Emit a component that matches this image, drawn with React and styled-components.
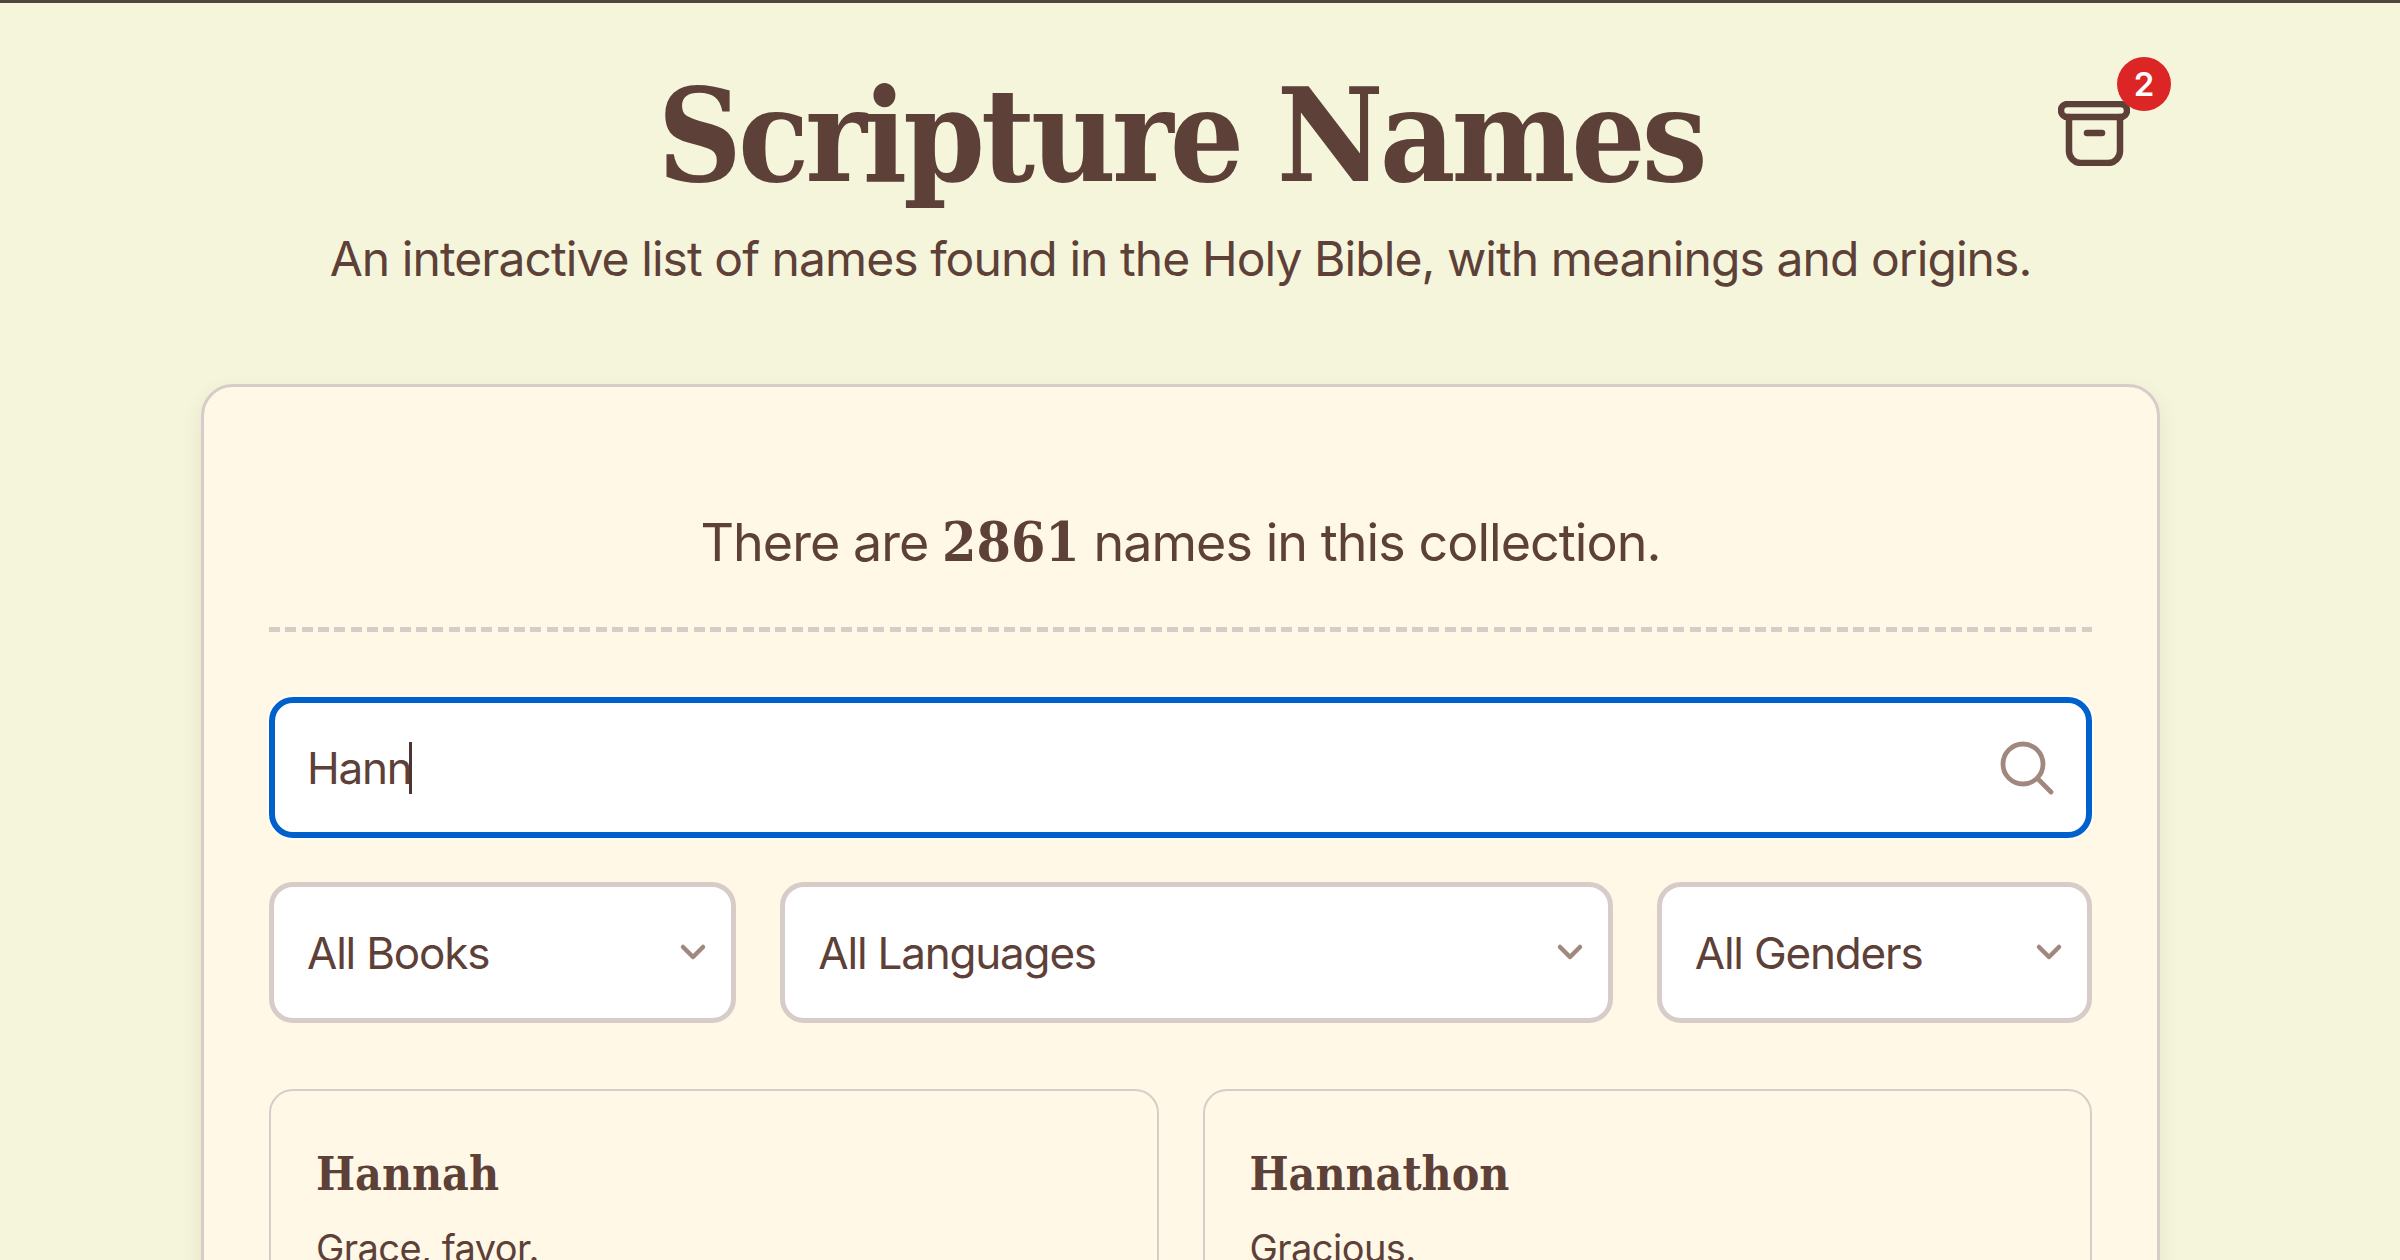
import React from "react";
import styled, { createGlobalStyle } from "styled-components";

const ink = "#5d4037";
const line = "#d7ccc8";
const muted = "#a1887f";
const serif = `"DejaVu Serif", "Liberation Serif", serif`;
const sans = `Inter, "Liberation Sans", sans-serif`;

const GlobalStyle = createGlobalStyle`
  html, body {
    margin: 0;
    height: 1260px;
    overflow: hidden;
    background: #f5f5dc;
  }
`;

const Page = styled.div`
  box-sizing: border-box;
  width: 2400px;
  height: 1260px;
  padding: 0 240px 0 201px;
  border-top: 3px solid #4e453c;
  color: ${ink};
  font-family: ${sans};
`;

const Header = styled.header`
  display: grid;
  grid-template-columns: 1fr auto 1fr;
  height: 381px;
`;

const Heading = styled.div`
  grid-column: 2;
  text-align: center;
`;

const Title = styled.h1`
  margin: 59px 0 0;
  font-family: ${serif};
  font-size: 130px;
  line-height: 148px;
  font-weight: 700;
  font-stretch: condensed;
  letter-spacing: -4px;
  white-space: nowrap;
`;

const Subtitle = styled.p`
  margin: 21px 0 0;
  font-size: 48px;
  line-height: 56px;
  letter-spacing: -0.93px;
  white-space: nowrap;
`;

const ArchiveButton = styled.button`
  grid-column: 3;
  justify-self: end;
  align-self: start;
  position: relative;
  margin: 98px 30px 0 0;
  padding: 0;
  width: 72px;
  height: 65px;
  border: 0;
  background: none;
  color: ${ink};
`;

const Badge = styled.span`
  position: absolute;
  top: -44px;
  right: -41px;
  width: 54px;
  height: 54px;
  display: flex;
  align-items: center;
  justify-content: center;
  border-radius: 50%;
  background: #dc2626;
  color: #fff;
  font-family: ${sans};
  font-size: 33px;
  font-weight: 600;
`;

const Panel = styled.main`
  box-sizing: border-box;
  height: 1100px;
  padding: 64px 65px;
  background: #fff8e7;
  border: 3px solid ${line};
  border-radius: 32px;
  box-shadow: 0 8px 20px rgba(93, 64, 55, 0.1);
`;

const Count = styled.p`
  margin: 49px 0 42px;
  text-align: center;
  font-size: 52px;
  line-height: 84px;
  letter-spacing: -0.95px;
`;

const CountNumber = styled.strong`
  font-family: ${serif};
  font-size: 55px;
  font-weight: 700;
  font-stretch: condensed;
  letter-spacing: 0;
`;

const Divider = styled.hr`
  margin: 0;
  height: 5px;
  border: 0;
  background: repeating-linear-gradient(90deg, ${line} 0 11px, transparent 11px 16.33px);
`;

const fieldBox = `
  box-sizing: border-box;
  height: 141px;
  display: flex;
  align-items: center;
  background: #fff;
  border-radius: 24px;
  font-size: 44px;
  letter-spacing: -1.2px;
`;

const SearchField = styled.div`
  ${fieldBox}
  margin-top: 65px;
  padding: 0 27px 0 32px;
  border: 6px solid #0060cc;
  box-shadow: 0 0 0 2px rgba(255, 255, 255, 0.7);
`;

const SearchValue = styled.span`
  line-height: 1;
`;

const Caret = styled.span`
  width: 3px;
  height: 52px;
  margin-left: -3px;
  background: #4e342e;
`;

const SearchIcon = styled.svg`
  margin-left: auto;
  width: 64px;
  height: 64px;
  color: ${muted};
`;

const Filters = styled.div`
  display: grid;
  grid-template-columns: 467fr 832fr 435fr;
  gap: 44px;
  margin-top: 44px;
`;

const SelectBox = styled.div`
  ${fieldBox}
  justify-content: space-between;
  padding: 0 24px 0 33px;
  border: 5px solid ${line};
`;

const Chevron = styled.svg`
  width: 28px;
  height: 20px;
  margin-top: -2px;
  color: ${muted};
`;

const Results = styled.div`
  display: grid;
  grid-template-columns: 1fr 1fr;
  gap: 44px;
  margin-top: 66px;
`;

const NameCard = styled.article`
  box-sizing: border-box;
  height: 300px;
  padding: 55px 45px;
  border: 2px solid ${line};
  border-radius: 24px;
`;

const Name = styled.h2`
  margin: 0;
  font-family: ${serif};
  font-size: 46px;
  line-height: 56px;
  font-weight: 700;
  font-stretch: condensed;
`;

const Meaning = styled.p`
  margin: 22px 0 0;
  font-size: 38px;
  line-height: 48px;
  letter-spacing: -0.55px;
`;

const SelectField = ({ label }) => (
  <SelectBox>
    {label}
    <Chevron viewBox="0 0 28 20" fill="none" stroke="currentColor" strokeWidth="4.5" strokeLinecap="round" strokeLinejoin="round">
      <path d="M4 5l10 10L24 5" />
    </Chevron>
  </SelectBox>
);

export default function App() {
  return (
    <>
      <GlobalStyle />
      <Page>
        <Header>
          <Heading>
            <Title>Scripture Names</Title>
            <Subtitle>An interactive list of names found in the Holy Bible, with meanings and origins.</Subtitle>
          </Heading>
          <ArchiveButton aria-label="Archive">
            <svg width="72" height="65" viewBox="0 0 72 65" fill="none" stroke="currentColor" strokeWidth="6.5" strokeLinecap="round">
              <rect x="3" y="3" width="66" height="13" rx="6.5" />
              <path d="M11 16V50a12 12 0 0 0 12 12H50a12 12 0 0 0 12-12V16" />
              <path d="M29 32H44" />
            </svg>
            <Badge>2</Badge>
          </ArchiveButton>
        </Header>
        <Panel>
          <Count>
            There are <CountNumber>2861</CountNumber> names in this collection.
          </Count>
          <Divider />
          <SearchField>
            <SearchValue>Hann</SearchValue>
            <Caret />
            <SearchIcon viewBox="0 0 24 24" fill="none" stroke="currentColor" strokeWidth="1.8" strokeLinecap="round" strokeLinejoin="round">
              <path d="m21 21-5.197-5.197m0 0A7.5 7.5 0 1 0 5.196 5.196a7.5 7.5 0 0 0 10.607 10.607Z" />
            </SearchIcon>
          </SearchField>
          <Filters>
            <SelectField label="All Books" />
            <SelectField label="All Languages" />
            <SelectField label="All Genders" />
          </Filters>
          <Results>
            <NameCard>
              <Name>Hannah</Name>
              <Meaning>Grace, favor.</Meaning>
            </NameCard>
            <NameCard>
              <Name>Hannathon</Name>
              <Meaning>Gracious.</Meaning>
            </NameCard>
          </Results>
        </Panel>
      </Page>
    </>
  );
}
